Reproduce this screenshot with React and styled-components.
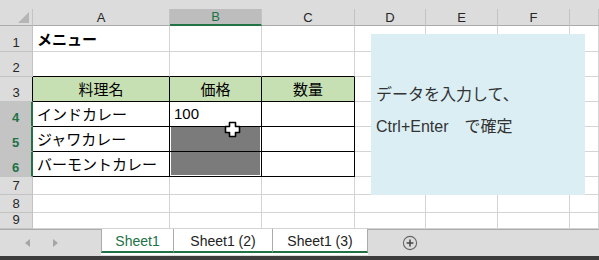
import styled, { createGlobalStyle } from "styled-components";

const GlobalStyle = createGlobalStyle`
  html, body {
    margin: 0;
    padding: 0;
    background: #fff;
    overflow: hidden;
  }
  body {
    font-family: "Liberation Sans", "Noto Sans CJK JP", sans-serif;
  }
`;

const GREEN = "#217346";
const GRID = "#D4D4D4";
const HEAD_LINE = "#C3C3C3";

const Window = styled.div`
  width: 599px;
  height: 260px;
  display: flex;
  flex-direction: column;
  overflow: hidden;
`;

const SheetArea = styled.div`
  position: relative;
  height: 229px;
  overflow: hidden;
  background: #fff;
`;

const TopStrip = styled.div`
  height: 9px;
  background: #dcdcdc;
`;

const Grid = styled.div`
  display: grid;
  grid-template-columns: 33px 137px 92px 93px 71px 72px 72px 29px;
  grid-template-rows: 17px ${(p) => p.$rows};
  width: 599px;
`;

const Corner = styled.div`
  box-sizing: border-box;
  background: #dcdcdc;
  border-right: 1px solid ${HEAD_LINE};
  border-bottom: 1px solid #ababab;
  display: flex;
  justify-content: flex-end;
  align-items: flex-end;
  padding: 0 3px 2px 0;
`;

const Triangle = styled.div`
  width: 0;
  height: 0;
  border-left: 11px solid transparent;
  border-bottom: 11px solid #b5b5b5;
`;

const ColHead = styled.div`
  box-sizing: border-box;
  background: ${(p) => (p.$sel ? "#bdbdbd" : "#dcdcdc")};
  color: ${(p) => (p.$sel ? GREEN : "#262626")};
  border-right: 1px solid ${HEAD_LINE};
  border-bottom: ${(p) => (p.$sel ? `2px solid ${GREEN}` : "1px solid #ababab")};
  font-size: 13px;
  display: flex;
  align-items: center;
  justify-content: center;
`;

const RowHead = styled.div`
  box-sizing: border-box;
  background: ${(p) => (p.$sel ? "#c4c4c4" : "#dcdcdc")};
  color: ${(p) => (p.$sel ? GREEN : "#262626")};
  font-weight: ${(p) => (p.$sel ? "bold" : "normal")};
  border-bottom: 1px solid ${HEAD_LINE};
  border-right: ${(p) => p.$edge};
  font-size: 13px;
  line-height: 1;
  display: flex;
  align-items: flex-end;
  justify-content: center;
  padding-bottom: 2px;
`;

const Cell = styled.div`
  box-sizing: border-box;
  background: ${(p) => (p.$fill ? "#7b7b7b" : p.$head ? "#c6e0b4" : "#fff")};
  border-right: 1px solid ${(p) => p.$rb};
  border-bottom: 1px solid ${(p) => p.$bb};
  box-shadow: ${(p) =>
    p.$fill
      ? p.$end
        ? "inset 1px 0 0 #fff, inset -1px 0 0 #fff, inset 0 -1px 0 #fff"
        : "inset 1px 0 0 #fff, inset -1px 0 0 #fff"
      : "none"};
  font-family: "Liberation Sans", "Noto Sans CJK JP", sans-serif;
  font-size: 15px;
  font-weight: ${(p) => (p.$bold ? "bold" : "normal")};
  color: #000;
  white-space: nowrap;
  display: flex;
  align-items: center;
  justify-content: ${(p) => (p.$center ? "center" : "flex-start")};
  padding: 0 4px 1px;
`;

const TextBox = styled.div`
  position: absolute;
  left: 371px;
  top: 34px;
  width: 214px;
  height: 161px;
  box-sizing: border-box;
  background: #daeef3;
  padding: 45px 0 0 5px;
  font-family: "Liberation Sans", "Noto Sans CJK JP", sans-serif;
  font-size: 16px;
  line-height: 32px;
  color: #333;
  white-space: nowrap;
`;

const Cursor = styled.svg`
  position: absolute;
  left: 224px;
  top: 121px;
`;

const TabBar = styled.div`
  height: 27px;
  box-sizing: border-box;
  background: #dcdcdc;
  border-top: 1px solid #ababab;
  display: flex;
  align-items: flex-start;
`;

const Nav = styled.div`
  width: 101px;
  height: 26px;
  display: flex;
  align-items: center;
  gap: 21px;
  padding-left: 25px;
  box-sizing: border-box;
`;

const Tabs = styled.div`
  display: flex;
  background: #fff;
  height: 26px;
  box-sizing: border-box;
  padding-bottom: 2px;
  margin-top: -1px;
`;

const Tab = styled.div`
  width: ${(p) => p.$w}px;
  box-sizing: border-box;
  border-left: 1px solid #ababab;
  border-right: ${(p) => (p.$last ? "1px solid #ababab" : "none")};
  border-bottom: 2px solid ${GREEN};
  color: ${(p) => (p.$active ? GREEN : "#222")};
  font-family: "Liberation Sans", sans-serif;
  font-size: 14px;
  display: flex;
  align-items: center;
  justify-content: center;
  padding-top: 1px;
`;

const AddButton = styled.div`
  margin-left: 34px;
  height: 26px;
  display: flex;
  align-items: center;
`;

const BottomBar = styled.div`
  height: 4px;
  background: #3c3c3c;
`;

// G is only partly on screen, so its letter is not shown
const cols = ["A", "B", "C", "D", "E", "F", "G"];
const labels = { A: "A", B: "B", C: "C", D: "D", E: "E", F: "F", G: "" };

const rows = [
  { n: 1, h: 26, cells: { A: { text: "メニュー", bold: true } } },
  { n: 2, h: 25 },
  {
    n: 3,
    h: 25,
    cells: {
      A: { text: "料理名", center: true, head: true },
      B: { text: "価格", center: true, head: true },
      C: { text: "数量", center: true, head: true },
    },
  },
  { n: 4, h: 25, sel: true, cells: { A: { text: "インドカレー" }, B: { text: "100" } } },
  { n: 5, h: 25, sel: true, cells: { A: { text: "ジャワカレー" }, B: { fill: true } } },
  { n: 6, h: 25, sel: true, cells: { A: { text: "バーモントカレー" }, B: { fill: true, end: true } } },
  { n: 7, h: 18 },
  { n: 8, h: 18 },
  { n: 9, h: 16 },
];

const inTable = (n, c) => n >= 3 && n <= 6 && ["A", "B", "C"].includes(c);

function SheetGrid() {
  return (
    <Grid $rows={rows.map((r) => `${r.h}px`).join(" ")}>
      <Corner>
        <Triangle />
      </Corner>
      {cols.map((c) => (
        <ColHead key={c} $sel={c === "B"}>
          {labels[c]}
        </ColHead>
      ))}
      {rows.map((r) => {
        let edge = `1px solid ${HEAD_LINE}`;
        if (r.n === 3) edge = "1px solid #000";
        if (r.sel) edge = `2px solid ${GREEN}`;
        return [
          <RowHead key={`h${r.n}`} $sel={r.sel} $edge={edge}>
            {r.n}
          </RowHead>,
          ...cols.map((c) => {
            const cell = (r.cells && r.cells[c]) || {};
            const table = inTable(r.n, c);
            const rb = table ? "#000" : GRID;
            const bb = table || (r.n === 2 && ["A", "B", "C"].includes(c)) ? "#000" : GRID;
            return (
              <Cell
                key={`${c}${r.n}`}
                $rb={rb}
                $bb={bb}
                $bold={cell.bold}
                $center={cell.center}
                $head={cell.head}
                $fill={cell.fill}
                $end={cell.end}
              >
                {cell.text}
              </Cell>
            );
          }),
        ];
      })}
    </Grid>
  );
}

export default function App() {
  return (
    <Window>
      <GlobalStyle />
      <SheetArea>
        <TopStrip />
        <SheetGrid />
        <TextBox>
          <div>データを入力して、</div>
          <div>Ctrl+Enter　で確定</div>
        </TextBox>
        <Cursor width="17" height="17" viewBox="0 0 17 17">
          <path
            d="M5.5 1.5 h6 v4 h4 v6 h-4 v4 h-6 v-4 h-4 v-6 h4 z"
            fill="#fff"
            stroke="#000"
            strokeWidth="1.6"
            strokeLinejoin="round"
          />
        </Cursor>
      </SheetArea>
      <TabBar>
        <Nav>
          <svg width="6" height="8" viewBox="0 0 6 8">
            <path d="M5 0 L0 4 L5 8 Z" fill="#a6a6a6" />
          </svg>
          <svg width="6" height="8" viewBox="0 0 6 8">
            <path d="M1 0 L6 4 L1 8 Z" fill="#a6a6a6" />
          </svg>
        </Nav>
        <Tabs>
          <Tab $w={72} $active>
            Sheet1
          </Tab>
          <Tab $w={99}>Sheet1 (2)</Tab>
          <Tab $w={96} $last>
            Sheet1 (3)
          </Tab>
        </Tabs>
        <AddButton>
          <svg width="16" height="16" viewBox="0 0 16 16">
            <circle cx="8" cy="8" r="6.6" fill="none" stroke="#666" strokeWidth="1.1" />
            <path d="M8 4.6 V11.4 M4.6 8 H11.4" stroke="#444" strokeWidth="1.5" />
          </svg>
        </AddButton>
      </TabBar>
      <BottomBar />
    </Window>
  );
}
